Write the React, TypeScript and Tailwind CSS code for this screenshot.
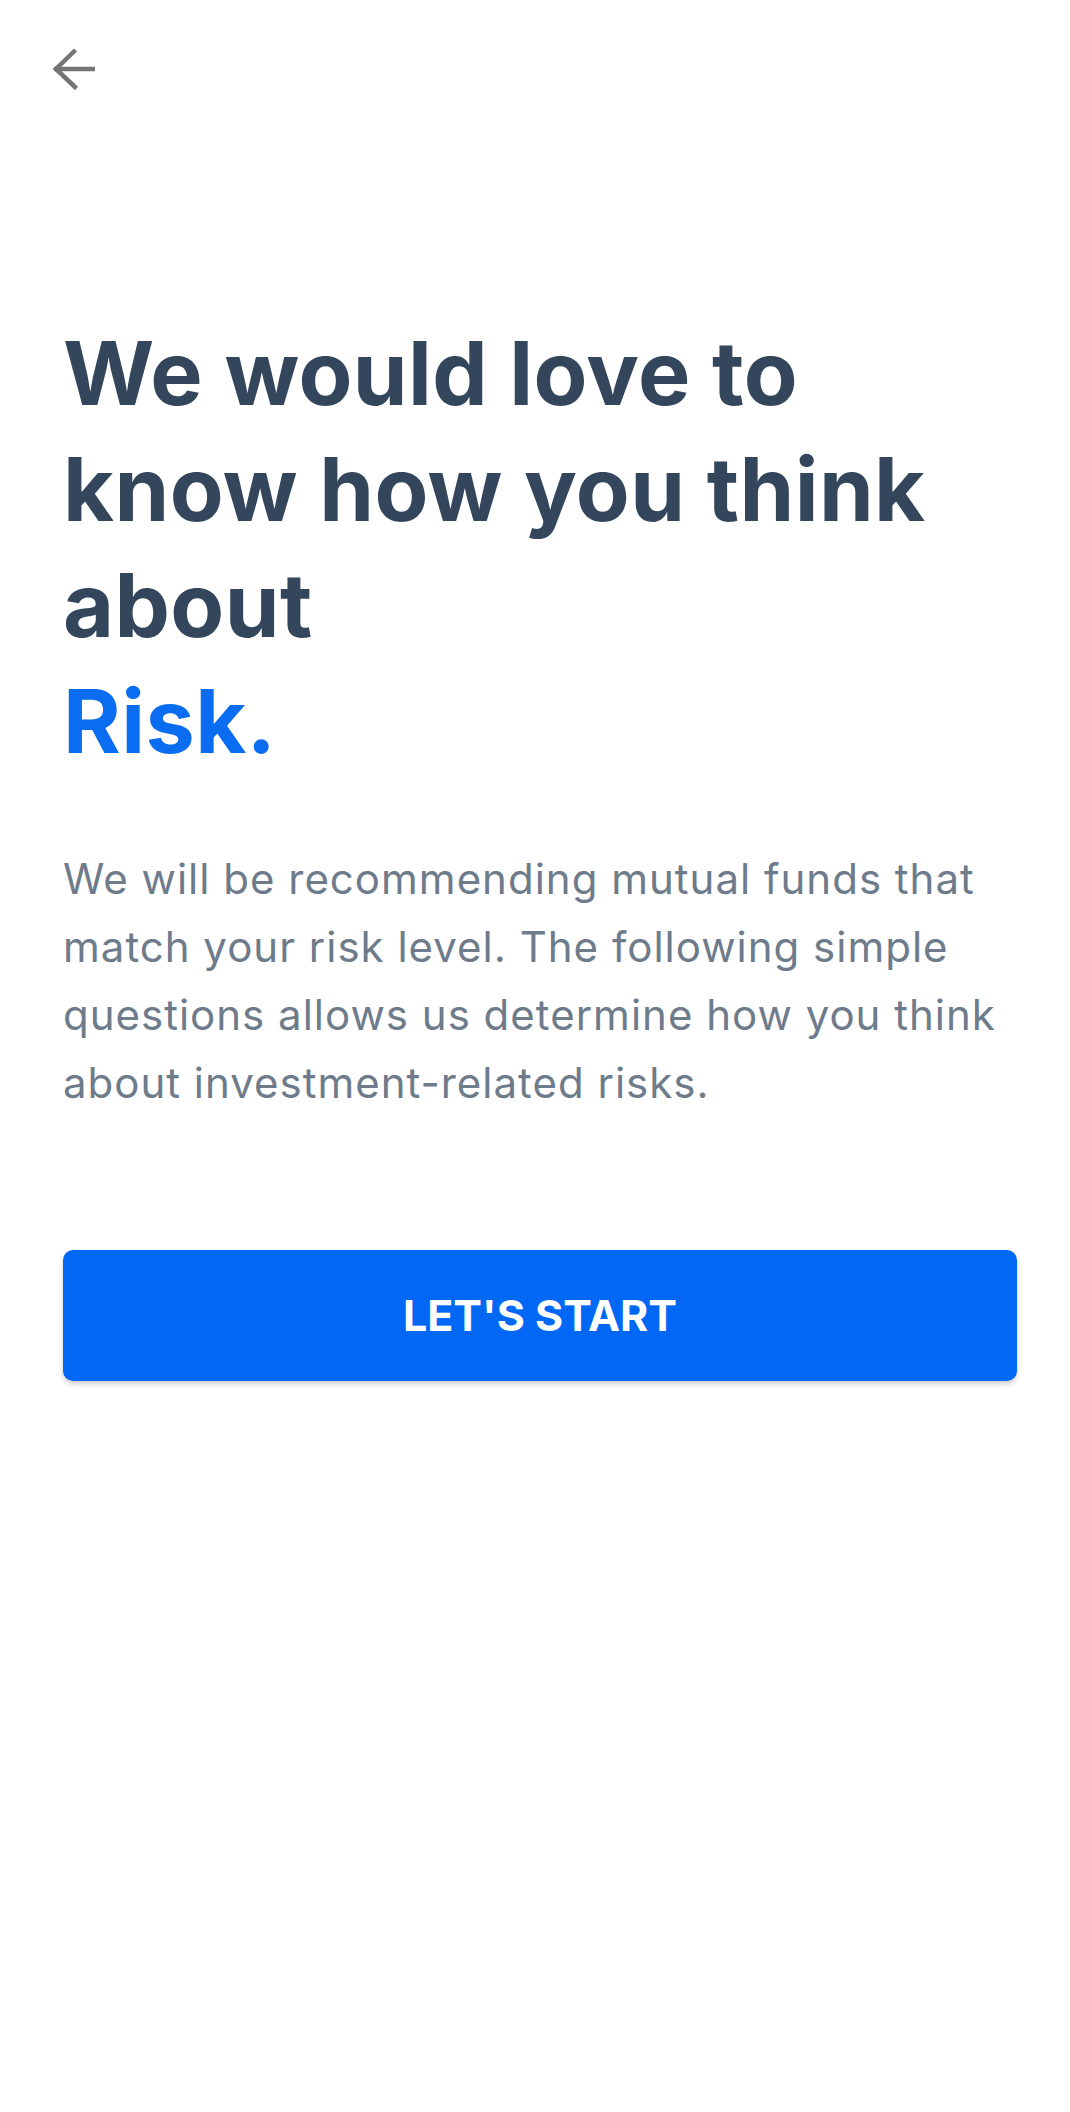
import React from "react";

export default function App() {
  return (
    <div className="w-full h-[2112px] overflow-hidden bg-white" style={{ fontFamily: "Inter, 'Noto Sans', sans-serif" }}>
      <div className="pl-[48px] pt-[44px]">
        <svg width="52" height="52" viewBox="0 0 52 52" fill="none">
          <path d="M6 25 H47" stroke="#757575" strokeWidth="4.5" />
          <path d="M27.5 6 L8 25 L28.5 44.5" stroke="#757575" strokeWidth="4.5" strokeLinejoin="miter" />
        </svg>
      </div>
      <div className="pl-[63px] pr-[53px] pt-[219px]">
        <h1 className="text-[88px] leading-[116px] font-bold text-[#34465c] tracking-[0.4px]">
          We would love to
          <br />
          know how you think
          <br />
          about
          <br />
          <span className="text-[#0a6cf0]">Risk.</span>
        </h1>
        <p className="mt-[66px] text-[42px] leading-[68px] text-[#6e7b8b] tracking-[1px]">
          We will be recommending mutual funds that match your risk level. The following simple questions allows us determine how you think about investment-related risks.
        </p>
        <button className="mt-[133px] w-full h-[131px] rounded-[10px] bg-[#0068f5] text-white text-[43px] font-bold shadow-[0_3px_5px_rgba(0,0,0,0.2)] flex items-center justify-center">
          LET'S START
        </button>
      </div>
    </div>
  );
}
